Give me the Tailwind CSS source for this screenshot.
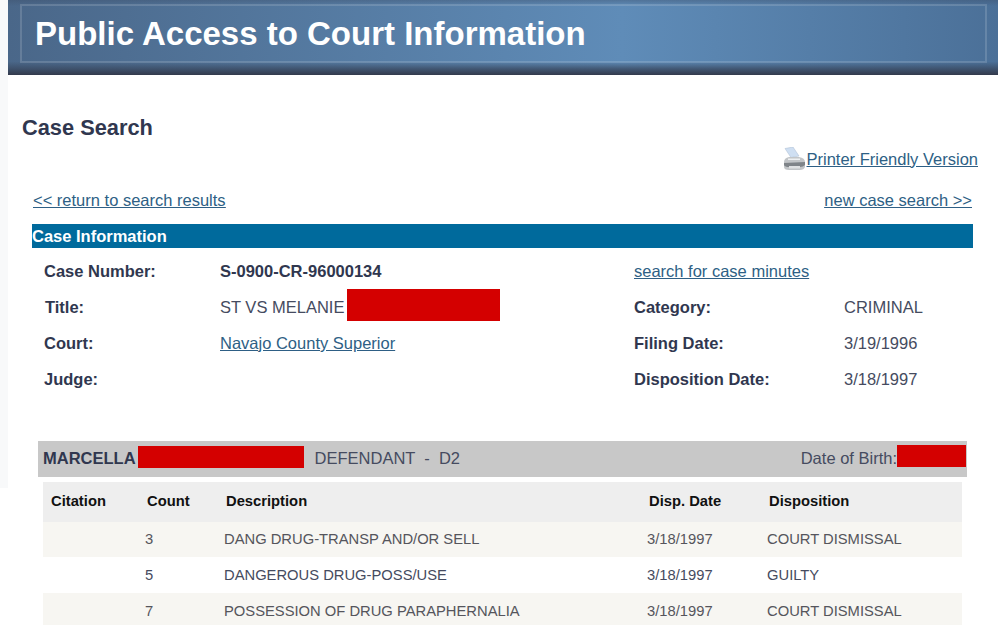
<!DOCTYPE html>
<html><head><meta charset="utf-8"><script src="https://cdn.jsdelivr.net/npm/@tailwindcss/browser@4"></script></head>
<body class="bg-white overflow-hidden font-['Liberation_Sans',Arial,sans-serif] text-[#333b55]">
<div class="relative w-[1000px] h-[625px] overflow-hidden flex">
  <div class="w-2 h-[488px] bg-[#f8f9fa] shrink-0"></div>
  <div class="w-[990px] shrink-0">
    <header class="h-[75px] bg-[linear-gradient(to_bottom,#3d4f6a66_0%,transparent_8%,transparent_82%,#3a4a62cc_92%,#333a4c_100%),linear-gradient(to_right,#4a6789_0%,#5f8cb8_62%,#4b7098_100%)] pt-1 pl-[12px] pr-[11px]">
      <div class="h-[59px] border-2 border-white/15 pl-[13px] flex items-center">
        <h1 class="text-[33px] font-bold text-white leading-none -mt-[1px]">Public Access to Court Information</h1>
      </div>
    </header>
    <h2 class="text-[21.8px] font-bold leading-none text-[#30374f] ml-[14px] mt-[42px]">Case Search</h2>
    <div class="flex justify-end items-center mr-[20px] mt-[8px] h-[24px]">
      <svg class="w-[24px] h-[24px]" viewBox="0 0 24 24"><path d="M2 1.5l8-1.5 6 9-8 1.5z" fill="#cfdff2" stroke="#a8bbd0" stroke-width=".5"/><path d="M1 15q0-4 5-5h10q6 1 6 5v5q-1 3-5 3H6q-5 0-5-3z" fill="#c2c5c8"/><path d="M1 16l21-1v3q-2 2-5 2H6q-4 0-5-2z" fill="#7f8489"/><path d="M6 19h11v2.5H6z" fill="#dfe1e3"/><path d="M5 11.5h12v1.5H5z" fill="#eef0f2"/></svg>
      <a class="text-[16.5px] text-[#2e5f85] underline leading-none">Printer Friendly Version</a>
    </div>
    <div class="flex justify-between text-[16.5px] ml-[25px] mr-[26px] mt-[21px] leading-none text-[#2e5f85] underline">
      <a>&lt;&lt; return to search results</a><a>new case search &gt;&gt;</a>
    </div>
    <div class="ml-6 mr-[25px] mt-[16px] h-[24px] bg-[#006a9c] text-white font-bold text-[16.5px] leading-[24px]">Case Information</div>
    <div class="ml-[36px] mt-[5px] grid grid-cols-[176px_414px_210px_auto] grid-rows-[36px_36px_36px_36px] items-center text-[16.5px] text-[#454b60]">
      <b class="text-[#30374f]">Case Number:</b><b class="text-[#30374f]">S-0900-CR-96000134</b><a class="col-span-2 text-[#2e5f85] underline">search for case minutes</a>
      <b class="text-[#30374f] pl-px">Title:</b><div class="flex items-center">ST VS MELANIE<span class="ml-[3px] w-[153px] h-[32px] bg-[#d40000] -mt-[4px]"></span></div><b class="text-[#30374f]">Category:</b><span>CRIMINAL</span>
      <b class="text-[#30374f]">Court:</b><a class="text-[#2e5f85] underline">Navajo County Superior</a><b class="text-[#30374f]">Filing Date:</b><span>3/19/1996</span>
      <b class="text-[#30374f]">Judge:</b><span></span><b class="text-[#30374f]">Disposition Date:</b><span>3/18/1997</span>
    </div>
    <div class="ml-[30px] mr-[31px] mt-[44px] h-[36px] bg-[#c8c8c8] flex items-center text-[16.5px] text-[#454b60] pl-[5px] pb-[2px]">
      <b class="text-[#30374f]">MARCELLA</b>
      <span class="ml-[2px] w-[166px] h-[22px] bg-[#d40000] -mt-[2px]"></span>
      <span class="ml-[11px] whitespace-pre">DEFENDANT  -  D2</span>
      <span class="ml-auto">Date of Birth:</span>
      <span class="w-[69px] h-[22px] bg-[#d40000] -mt-[4px] mr-px"></span>
    </div>
    <div class="ml-[35px] mr-[36px] mt-[5px] text-[14.75px] text-[#454b60]">
      <div class="grid grid-cols-[96px_79px_423px_120px_1fr] h-[40px] items-center bg-[#eeeeee] text-[#111] font-bold pl-2 pb-[2px]">
        <span>Citation</span><span>Count</span><span>Description</span><span>Disp. Date</span><span>Disposition</span>
      </div>
      <div class="grid grid-cols-[102px_79px_423px_120px_1fr] h-[35px] items-center bg-[#f7f6f2] text-[#55555c] pb-[2px]"><span></span><span>3</span><span>DANG DRUG-TRANSP AND/OR SELL</span><span>3/18/1997</span><span>COURT DISMISSAL</span></div>
      <div class="grid grid-cols-[102px_79px_423px_120px_1fr] h-[36px] items-center bg-white"><span></span><span>5</span><span>DANGEROUS DRUG-POSS/USE</span><span>3/18/1997</span><span>GUILTY</span></div>
      <div class="grid grid-cols-[102px_79px_423px_120px_1fr] h-[36px] items-center bg-[#f7f6f2] text-[#55555c]"><span></span><span>7</span><span>POSSESSION OF DRUG PARAPHERNALIA</span><span>3/18/1997</span><span>COURT DISMISSAL</span></div>
    </div>
  </div>
</div>
</body></html>
